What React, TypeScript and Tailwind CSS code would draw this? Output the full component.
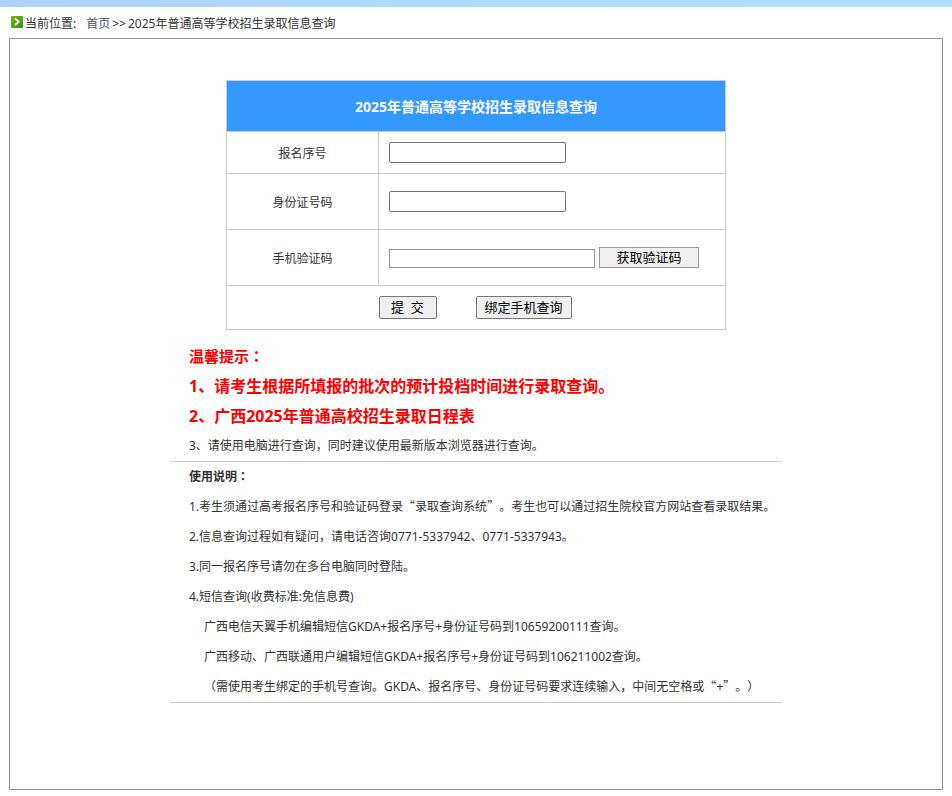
import type { ReactNode } from "react";

const PAGE_TITLE = "2025年普通高等学校招生录取信息查询";

// full-width quote, taken from the Chinese font instead of the latin one
function Quote({ children }: { children: ReactNode }) {
  return (
    <span className="font-['Noto_Sans_CJK_SC',sans-serif] leading-none">
      {children}
    </span>
  );
}

// colon that sits in the middle of its full-width cell
function Colon() {
  return (
    <span
      lang="zh-TW"
      className="font-['Noto_Sans_CJK_TC',sans-serif] leading-none"
    >
      ：
    </span>
  );
}

function TopBanner() {
  return (
    <div className="h-[7px] bg-linear-to-r from-[#acd3fd] via-[#b0ddff] to-[#b0dfff]" />
  );
}

function ArrowIcon() {
  return (
    <svg
      className="mb-[2px]"
      width="12"
      height="12"
      viewBox="0 0 12 12"
      aria-hidden="true"
    >
      <defs>
        <linearGradient id="arrow-bg" x1="0" y1="0" x2="1" y2="1">
          <stop offset="0" stopColor="#74b80e" />
          <stop offset="1" stopColor="#35941c" />
        </linearGradient>
      </defs>
      <rect width="12" height="12" rx="1" fill="url(#arrow-bg)" />
      <path d="M4 2.5 L7.8 5.7 L4 9" fill="none" stroke="#fff" strokeWidth="1.7" />
    </svg>
  );
}

function Breadcrumb() {
  return (
    <nav className="flex h-[31px] items-center pl-[11px]">
      <ArrowIcon />
      <div className="flex pt-[2px] pl-[2px]">
        <span>当前位置:</span>
        <a href="#" className="ml-[10px] text-[#555]">
          首页
        </a>
        <span className="px-[2px]">&gt;&gt;</span>
        <span>{PAGE_TITLE}</span>
      </div>
    </nav>
  );
}

const labelCell =
  "border border-[#ccc] w-[152px] pt-[2px] text-center font-normal";
const inputCell = "border border-[#ccc] px-[10px]";
const textInput =
  "block h-[21px] w-[177px] rounded-[2px] border border-[#767676] bg-white px-[2px]";
const formButton =
  "h-[23px] rounded-[2px] border border-[#767676] bg-[#efefef] text-[13px] text-black";

function QueryForm() {
  return (
    <form onSubmit={(e) => e.preventDefault()}>
      <table className="mx-auto w-[500px] border-collapse">
        <thead>
          <tr className="h-[51px]">
            <th
              colSpan={2}
              className="border border-[#ccc] bg-[#3399ff] text-[14px] font-bold text-white"
            >
              {PAGE_TITLE}
            </th>
          </tr>
        </thead>
        <tbody>
          <tr className="h-[42px]">
            <th className={labelCell}>
              <label htmlFor="bmxh">报名序号</label>
            </th>
            <td className={inputCell}>
              <input id="bmxh" type="text" className={textInput} />
            </td>
          </tr>
          <tr className="h-[56px]">
            <th className={labelCell}>
              <label htmlFor="sfzh">身份证号码</label>
            </th>
            <td className={inputCell}>
              <input id="sfzh" type="text" className={textInput} />
            </td>
          </tr>
          <tr className="h-[56px]">
            <th className={labelCell}>
              <label htmlFor="yzm">手机验证码</label>
            </th>
            <td className={inputCell}>
              <div className="flex items-end gap-1">
                <input
                  id="yzm"
                  type="text"
                  className="h-[19px] w-[206px] border border-[#999] bg-white px-[2px]"
                />
                <button
                  type="button"
                  className="h-[21px] w-[100px] border border-[#999] bg-[#efefef] text-[13px] leading-[19px] text-black"
                >
                  获取验证码
                </button>
              </div>
            </td>
          </tr>
          <tr className="h-[44px]">
            <td colSpan={2} className="border border-[#ccc] pr-[2px]">
              <div className="flex justify-center gap-[39px]">
                <button type="submit" className={`${formButton} w-[58px]`}>
                  提&nbsp;&nbsp;交
                </button>
                <button type="button" className={`${formButton} w-[96px]`}>
                  绑定手机查询
                </button>
              </div>
            </td>
          </tr>
        </tbody>
      </table>
    </form>
  );
}

function Notes() {
  return (
    <div className="mx-auto mt-[11px] w-[612px] leading-[30px] whitespace-nowrap">
      <section className="border-b border-[#ccc] pl-[19px]">
        <h2 className="text-[15px] font-bold text-[#ff0000]">
          温馨提示
          <Colon />
        </h2>
        <p className="text-[16px] font-bold text-[#ff0000]">
          1、请考生根据所填报的批次的预计投档时间进行录取查询。
        </p>
        <p className="text-[16px] font-bold">
          <a href="#" className="text-[#ff0000]">
            2、广西2025年普通高校招生录取日程表
          </a>
        </p>
        <p>3、请使用电脑进行查询，同时建议使用最新版本浏览器进行查询。</p>
      </section>
      <section className="border-b border-[#ccc] pl-[19px]">
        <h2 className="font-bold">
          使用说明
          <Colon />
        </h2>
        <p>
          1.考生须通过高考报名序号和验证码登录<Quote>“</Quote>录取查询系统
          <Quote>”</Quote>。考生也可以通过招生院校官方网站查看录取结果。
        </p>
        <p>2.信息查询过程如有疑问，请电话咨询0771-5337942、0771-5337943。</p>
        <p>3.同一报名序号请勿在多台电脑同时登陆。</p>
        <p>4.短信查询(收费标准:免信息费)</p>
        <div className="pl-[15px]">
          <p>广西电信天翼手机编辑短信GKDA+报名序号+身份证号码到10659200111查询。</p>
          <p>广西移动、广西联通用户编辑短信GKDA+报名序号+身份证号码到106211002查询。</p>
          <p>
            （需使用考生绑定的手机号查询。GKDA、报名序号、身份证号码要求连续输入，中间无空格或
            <Quote>“</Quote>+<Quote>”</Quote>。）
          </p>
        </div>
      </section>
    </div>
  );
}

export default function App() {
  return (
    <div
      lang="zh-CN"
      className="bg-white pb-[6px] font-['Noto_Sans','Noto_Sans_CJK_SC',sans-serif] text-[12px] text-[#333] [text-spacing-trim:space-all]"
    >
      <TopBanner />
      <Breadcrumb />
      <main className="mx-[9px] border border-[#999] pt-[41px] pb-[86px]">
        <QueryForm />
        <Notes />
      </main>
    </div>
  );
}
